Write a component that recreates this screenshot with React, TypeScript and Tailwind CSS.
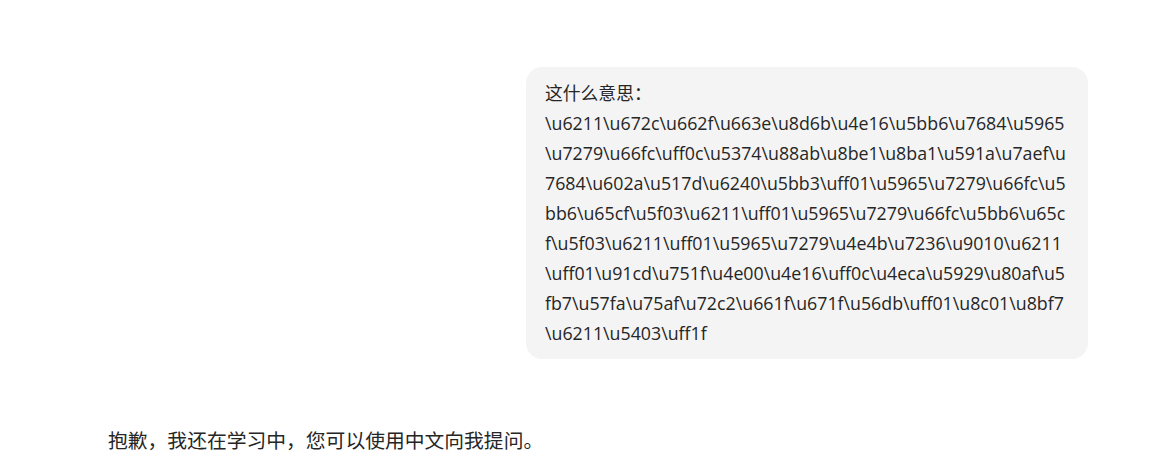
import React from "react";

const lines: string[] = [
  "这什么意思：",
  "\\u6211\\u672c\\u662f\\u663e\\u8d6b\\u4e16\\u5bb6\\u7684\\u5965",
  "\\u7279\\u66fc\\uff0c\\u5374\\u88ab\\u8be1\\u8ba1\\u591a\\u7aef\\u",
  "7684\\u602a\\u517d\\u6240\\u5bb3\\uff01\\u5965\\u7279\\u66fc\\u5",
  "bb6\\u65cf\\u5f03\\u6211\\uff01\\u5965\\u7279\\u66fc\\u5bb6\\u65c",
  "f\\u5f03\\u6211\\uff01\\u5965\\u7279\\u4e4b\\u7236\\u9010\\u6211",
  "\\uff01\\u91cd\\u751f\\u4e00\\u4e16\\uff0c\\u4eca\\u5929\\u80af\\u5",
  "fb7\\u57fa\\u75af\\u72c2\\u661f\\u671f\\u56db\\uff01\\u8c01\\u8bf7",
  "\\u6211\\u5403\\uff1f",
];

export default function App() {
  return (
    <div
      className="w-[1162px] h-[472px] bg-white text-[#262626] leading-[30px] pl-[108px] pr-[74px] pt-[67px] flex flex-col overflow-hidden"
      style={{ fontFamily: '"Open Sans", "Noto Sans CJK SC", sans-serif' }}
    >
      <div className="flex justify-end">
        <div className="w-[562px] bg-[#f4f4f4] rounded-[16px] pl-[19px] pr-[16px] py-[11px] text-[17.8px]">
          {lines.map((l, i) => (
            <div key={i} className="whitespace-nowrap">
              {l}
            </div>
          ))}
        </div>
      </div>
      <div className="mt-[67px] text-[19.8px]">抱歉，我还在学习中，您可以使用中文向我提问。</div>
    </div>
  );
}
